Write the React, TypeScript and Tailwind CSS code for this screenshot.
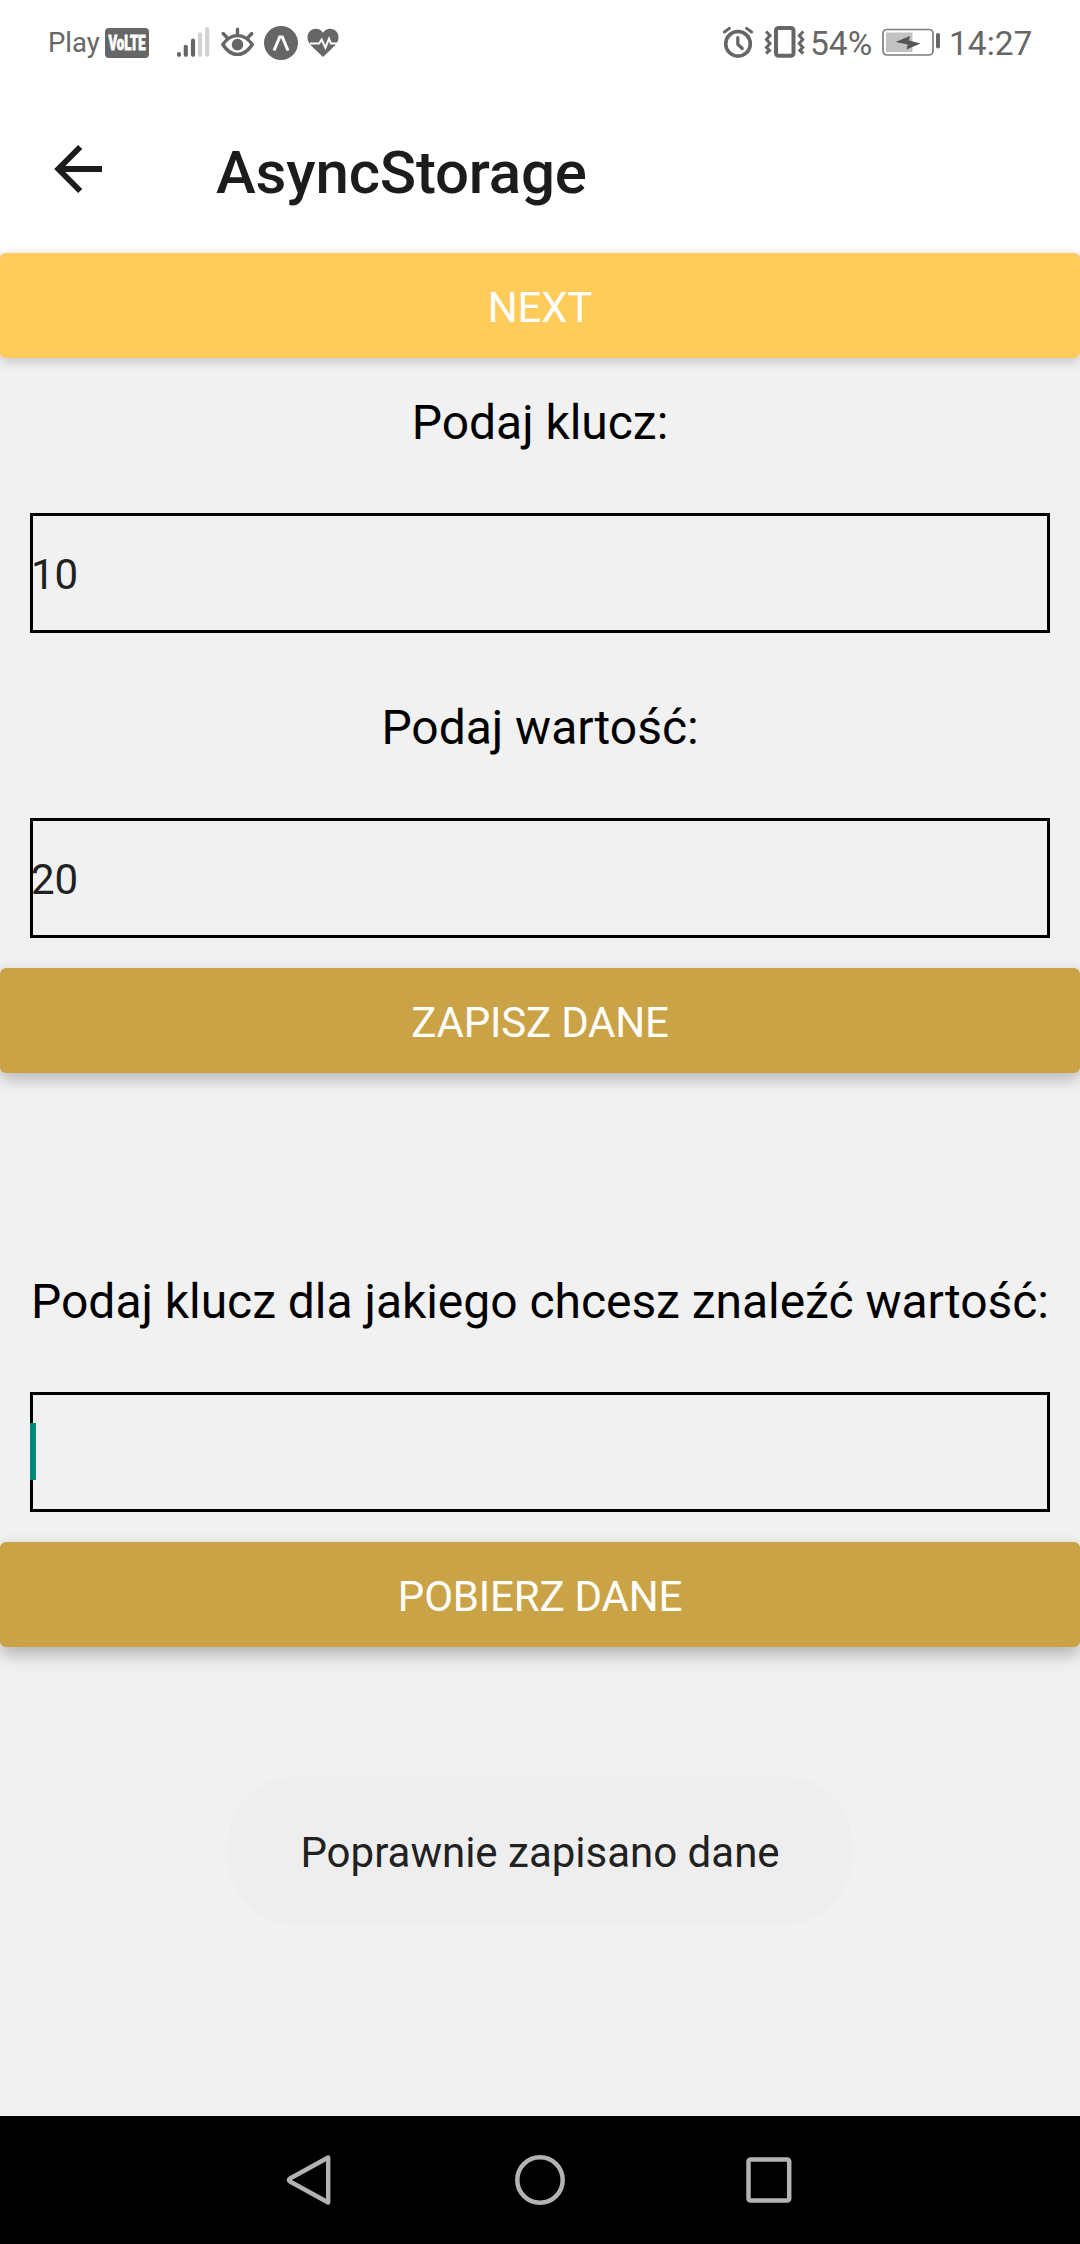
import type { ReactNode } from "react";

const GREY = "#666666";

function StatusBar() {
  return (
    <div className="flex h-[84px] items-start text-[#666666]">
      <span className="ml-[48px] mt-[27px] w-[57px] text-[27.5px] leading-[32px]">Play</span>
      <svg className="mt-[28px] block overflow-visible" width="44" height="30" viewBox="0 0 44 30">
        <rect width="44" height="30" rx="4" fill={GREY} />
        <text x="3.5" y="22" fill="#fff" stroke="#fff" strokeWidth="0.8" fontFamily="Roboto" fontWeight="900" fontSize="19.5" textLength="37" lengthAdjust="spacingAndGlyphs">VoLTE</text>
      </svg>
      <svg className="ml-[27px] mt-[26px] block" width="36" height="32" viewBox="0 0 36 32" strokeLinecap="round" strokeWidth="4.2" stroke={GREY}>
        <path d="M3 28.8v-.6M9.8 28.8v-8M17 28.8V14.7" />
        <path d="M24 28.8V8.4M31.2 28.8V3" stroke="#d2d2d2" />
      </svg>
      <svg className="ml-[8px] mt-[26px] block" width="36" height="32" viewBox="0 0 36 32" fill="none" stroke={GREY} strokeWidth="3.4" strokeLinecap="round">
        <path d="M2.8 18.500C7 12.200 12 9.600 17.500 9.600S28 12.200 32.300 18.500C28 25.200 23 28.400 17.500 28.400S7 25.200 2.800 18.500Z" strokeLinejoin="round" />
        <circle cx="17.500" cy="18.600" r="5.800" fill={GREY} stroke="none" />
        <path d="M17.500 8V3.200M6.500 11L3.200 7.500M28.500 11l3.300-3.500" strokeWidth="3.400" />
      </svg>
      <svg className="ml-[8px] mt-[26px] block" width="34" height="34" viewBox="0 0 34 34">
        <circle cx="17" cy="17" r="17" fill={GREY} />
        <path d="M10 24.500L15.700 11h2.600L24 24.500" fill="none" stroke="#fff" strokeWidth="3" />
      </svg>
      <svg className="ml-[9px] mt-[28px] block" width="33" height="30" viewBox="0 0 33 30">
        <path d="M16 29L4.300 17.700C1.800 15 .5 12.400.5 9.400.5 4.500 4 .8 8.700.8c3 0 5.700 1.600 7.300 4C17.600 2.400 20.300.8 23.300.8 28 .8 31.500 4.500 31.500 9.400c0 3-1.300 5.600-3.800 8.300Z" fill={GREY} />
        <path d="M3 15.600h9l2.700-4 3.700 8 3.600-9 2 5h6.500" fill="none" stroke="#fff" strokeWidth="2" />
      </svg>

      <svg className="ml-auto mt-[26px] block" width="32" height="32" viewBox="0 0 32 32" fill="none" stroke={GREY} strokeLinecap="round">
        <circle cx="16" cy="17.800" r="12.300" strokeWidth="3.600" />
        <path d="M15.800 11.500v6.700l4.500 4.300" strokeWidth="3.200" />
        <path d="M2.400 6L7.400 2.400M29.600 6L24.600 2.400" strokeWidth="3" />
      </svg>
      <svg className="ml-[10px] mt-[26px] block" width="42" height="32" viewBox="0 0 42 32" fill="none" stroke={GREY}>
        <rect x="12" y="2" width="17.500" height="27.800" rx="2.500" strokeWidth="4" />
        <path d="M2 5.500l4 4-3.500 4 3.500 4-3.500 4 3 3-3.500 3M39.300 5.500l-4 4 3.500 4-3.500 4 3.500 4-3 3 3.500 3" strokeWidth="3" />
      </svg>
      <span className="ml-[4px] mt-[25px] w-[72px] text-[33.5px] leading-[38px]">54%</span>
      <svg className="mt-[28px] block" width="60" height="30" viewBox="0 0 60 30">
        <rect x="1" y="1.500" width="50" height="25.500" rx="4" fill="none" stroke="#7d7d7d" strokeWidth="1.700" />
        <rect x="4" y="4.500" width="26.500" height="19.500" fill="#c2c2c2" />
        <path d="M13.500 14L28 8l-1 4.500L38.500 15.500 24.500 21.500l1.300-5Z" fill="#555" />
        <path d="M56 7v11.500" stroke={GREY} strokeWidth="4" strokeLinecap="round" />
      </svg>
      <span className="ml-[7px] mr-[44px] mt-[25px] w-[87px] text-[33.5px] leading-[38px]">14:27</span>
    </div>
  );
}

function Label({ children, className }: { children: ReactNode; className: string }) {
  return <p className={`${className} mb-[62px] whitespace-nowrap text-center text-[48px] leading-[56px] tracking-[-0.04px] text-black`}>{children}</p>;
}

function Field({ value, focused = false }: { value: string; focused?: boolean }) {
  return (
    <div className="relative mx-[30px] flex h-[120px] shrink-0 items-center border-[3px] border-black pt-[4px]">
      <span className="ml-[-2px] text-[42px] leading-[50px] text-[#212121]">{value}</span>
      {focused && <span className="absolute left-[-3px] top-[28px] h-[57px] w-[6px] bg-[#008977]" />}
    </div>
  );
}

function Button({ children, className }: { children: ReactNode; className: string }) {
  return (
    <button className={`${className} flex h-[105px] w-full shrink-0 items-center justify-center rounded-[6px] pt-[4px] text-[42px] leading-[50px] tracking-[-0.2px] text-white`}>
      {children}
    </button>
  );
}

function NavigationBar() {
  return (
    <nav className="flex h-[128px] shrink-0 items-center justify-center gap-[180px] bg-black">
      <svg width="50" height="50" viewBox="0 0 50 50" fill="none" stroke="#b3b3b3" strokeWidth="4.400" strokeLinejoin="round">
        <path d="M43.200 2.500v45L5 26.500q-2.200-1.500 0-3Z" />
      </svg>
      <svg width="50" height="50" viewBox="0 0 50 50" fill="none" stroke="#b3b3b3" strokeWidth="4.500">
        <circle cx="25" cy="25" r="22.700" />
      </svg>
      <svg width="50" height="50" viewBox="0 0 50 50" fill="none" stroke="#b3b3b3" strokeWidth="4.500">
        <rect x="3.500" y="4.500" width="40.700" height="41" rx="2" />
      </svg>
    </nav>
  );
}

export default function App() {
  return (
    <div className="flex h-[2244px] w-[1080px] flex-col overflow-hidden bg-[#f1f1f1] font-['Roboto',sans-serif]">
      <header className="h-[253px] shrink-0 bg-white">
        <StatusBar />
        <div className="flex h-[169px] items-start">
          <svg className="ml-[54px] mt-[60px] block" width="50" height="50" viewBox="0 0 50 50" fill="none" stroke="#1c1c1e" strokeWidth="5.800">
            <path d="M26.200 3L4.300 25l21.900 22M4.300 25H48" />
          </svg>
          <h1 className="ml-[112px] mt-[54px] text-[60px] font-medium leading-[70px] tracking-[-0.2px] text-[#1c1c1e]">AsyncStorage</h1>
        </div>
      </header>

      <main className="flex flex-1 flex-col">
        <Button className="bg-[#ffcb5b] shadow-[0_3px_12px_rgba(0,0,0,0.2)]">NEXT</Button>
        <Label className="mt-[37px]">Podaj klucz:</Label>
        <Field value="10" />
        <Label className="mt-[67px]">Podaj wartość:</Label>
        <Field value="20" />
        <Button className="mt-[30px] bg-[#cba347] shadow-[0_6px_16px_rgba(0,0,0,0.25)]">ZAPISZ DANE</Button>
        <Label className="mt-[201px]">Podaj klucz dla jakiego chcesz znaleźć wartość:</Label>
        <Field value="" focused />
        <Button className="mt-[30px] bg-[#cba347] shadow-[0_7px_17px_rgba(0,0,0,0.28)]">POBIERZ DANE</Button>
        <div className="mt-[130px] flex h-[147px] w-[624px] shrink-0 items-center justify-center self-center rounded-[66px] bg-[#eeeeee] pt-[4px] text-[42px] leading-[50px] text-[#212121]">
          Poprawnie zapisano dane
        </div>
      </main>

      <NavigationBar />
    </div>
  );
}
